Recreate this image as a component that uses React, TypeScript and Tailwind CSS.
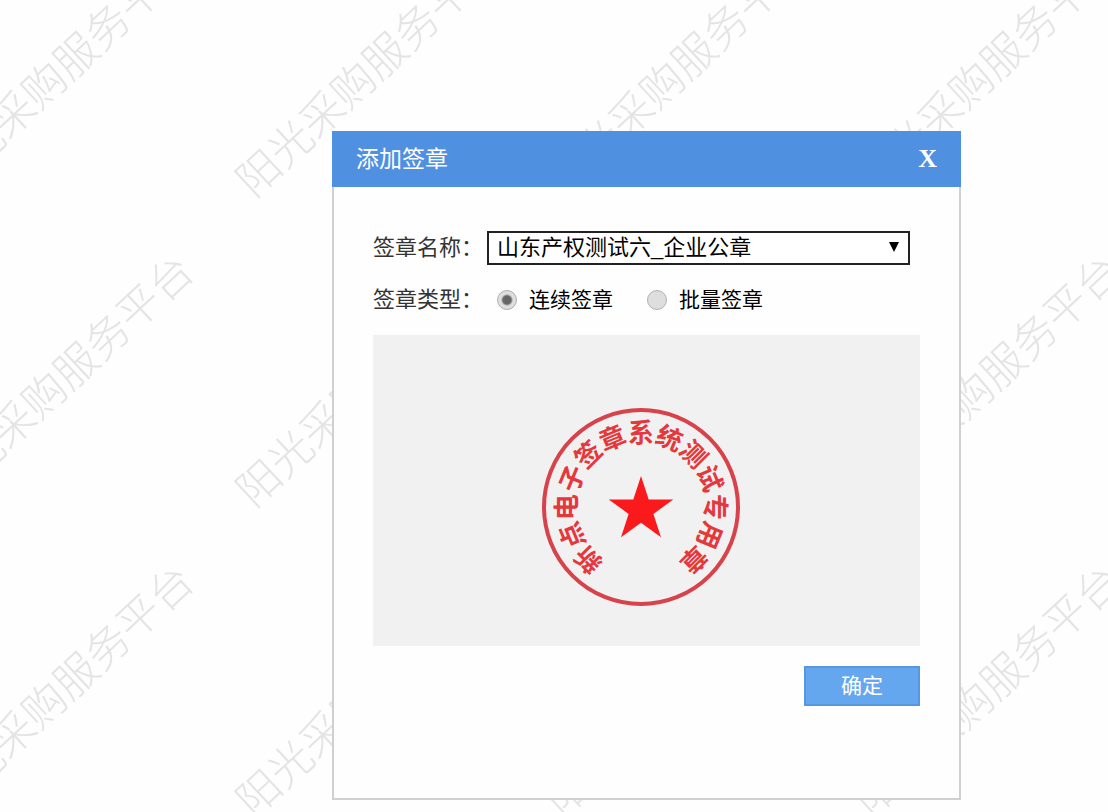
import { useState } from 'react';

const SEAL_TEXT = '新点电子签章系统测试专用章';
const SEAL_STEP = 22.5;

const SEAL_TYPES = [
  { value: 'continuous', label: '连续签章' },
  { value: 'batch', label: '批量签章' },
];

function Watermark() {
  return (
    <svg className="absolute inset-0 h-full w-full" aria-hidden="true">
      <defs>
        <pattern id="watermark" x="211" y="235" width="309" height="310" patternUnits="userSpaceOnUse">
          <text
            transform="translate(43 274) rotate(-43)"
            textAnchor="start"
            className="fill-[#e4e4e4] text-[43px] font-light"
          >
            阳光采购服务平台
          </text>
        </pattern>
      </defs>
      <rect width="100%" height="100%" fill="url(#watermark)" />
    </svg>
  );
}

function Seal() {
  const middle = (SEAL_TEXT.length - 1) / 2;

  return (
    <svg viewBox="0 0 200 200" className="size-[200px]" role="img" aria-label={SEAL_TEXT}>
      <circle cx="100" cy="100" r="97" fill="none" stroke="#d8424a" strokeWidth="4" />
      <polygon
        fill="#fa1a1c"
        points="100,69 107.7,92.4 132.3,92.4 112.4,106.9 120,130.3 100,115.8 80,130.3 87.6,106.9 67.7,92.4 92.3,92.4"
      />
      {SEAL_TEXT.split('').map((char, i) => (
        <text
          key={i}
          x="100"
          y="35"
          textAnchor="middle"
          transform={`rotate(${(i - middle) * SEAL_STEP} 100 100)`}
          className="fill-[#e5383d] text-[26px] font-bold"
        >
          {char}
        </text>
      ))}
    </svg>
  );
}

export default function App() {
  const [type, setType] = useState('continuous');

  return (
    <div className="relative min-h-screen overflow-hidden bg-[#fefefe] pt-[131px] pr-[147px] pb-3 pl-[332px] font-['Liberation_Sans','Noto_Sans_CJK_SC',sans-serif] text-[22px] leading-8 text-black">
      <Watermark />

      <div role="dialog" aria-labelledby="dialog-title" className="relative bg-[#fefefe]">
        <header className="flex h-14 items-center justify-between bg-[#5090e1] px-6 text-white">
          <h1 id="dialog-title" className="text-[23px]">
            添加签章
          </h1>
          <button type="button" aria-label="X" className="font-['Liberation_Serif',serif] text-[26px] font-bold">
            X
          </button>
        </header>

        <form
          className="border-2 border-t-0 border-[#d0d0d0] px-[39px] pt-11 pb-[92px]"
          onSubmit={(e) => e.preventDefault()}
        >
          <div className="flex items-center pr-[10px]">
            <label htmlFor="seal-name" className="w-[114px] shrink-0 whitespace-nowrap text-[#333]">
              签章名称：
            </label>
            <div className="relative min-w-0 flex-1">
              <select
                id="seal-name"
                className="block h-[34px] w-full appearance-none border-2 border-[#222] bg-white px-2 leading-[30px]"
              >
                <option>山东产权测试六_企业公章</option>
              </select>
              <svg
                viewBox="0 0 10 10"
                className="pointer-events-none absolute top-[11px] right-[11px] size-[10px]"
                aria-hidden="true"
              >
                <path d="M0 0h10L5 10z" />
              </svg>
            </div>
          </div>

          <fieldset className="mt-[19px] flex items-center">
            <legend className="float-left w-[124px] whitespace-nowrap text-[#333]">签章类型：</legend>
            <div className="flex gap-[34px]">
              {SEAL_TYPES.map((item) => (
                <label key={item.value} className="flex items-center gap-3 whitespace-nowrap text-[21px]">
                  <input
                    type="radio"
                    name="seal-type"
                    value={item.value}
                    checked={type === item.value}
                    onChange={() => setType(item.value)}
                    className="size-5 appearance-none rounded-full border border-[#b0b0b0] bg-[#dedede] checked:bg-[radial-gradient(circle,#666_0_4px,#dedede_6px)]"
                  />
                  {item.label}
                </label>
              ))}
            </div>
          </fieldset>

          <div className="mt-[19px] flex h-[311px] items-center justify-center bg-[#f1f1f1] pt-8 pr-3">
            <Seal />
          </div>

          <div className="mt-5 flex justify-end">
            <button
              type="submit"
              className="h-10 w-[116px] border-2 border-[#5796e2] bg-[#64a7ee] text-[21px] leading-9 text-white"
            >
              确定
            </button>
          </div>
        </form>
      </div>
    </div>
  );
}
